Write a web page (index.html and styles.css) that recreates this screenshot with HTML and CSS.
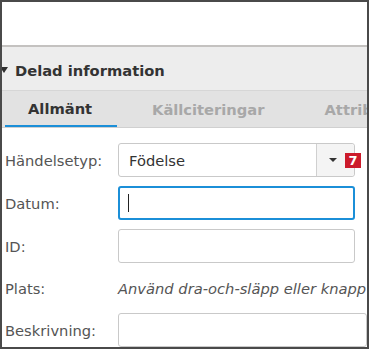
FILE: index.html
```html
<!DOCTYPE html>
<html lang="sv">
  <head>
    <meta charset="UTF-8" />
    <meta name="viewport" content="width=device-width, initial-scale=1.0" />
    <title>Händelse</title>
    <link rel="stylesheet" href="styles.css">
  </head>
  <body>
    <div class="frame">
      <div class="top-space"></div>

      <div class="section-head">
        <span class="caret"></span>
        <span class="section-title">Delad information</span>
      </div>

      <div class="tabs">
        <div class="tab active">Allmänt</div>
        <div class="tab">Källciteringar</div>
        <div class="tab">Attribut</div>
      </div>

      <div class="form">
        <div class="row">
          <label class="label">Händelsetyp:</label>
          <div class="select">
            <span class="select-value">Födelse</span>
            <span class="select-btn"><span class="arrow"></span></span>
            <span class="badge">7</span>
          </div>
        </div>

        <div class="row">
          <label class="label">Datum:</label>
          <div class="input focused"><span class="cursor"></span></div>
        </div>

        <div class="row">
          <label class="label">ID:</label>
          <div class="input"></div>
        </div>

        <div class="row row-text">
          <label class="label">Plats:</label>
          <span class="hint">Använd dra-och-släpp eller knapp</span>
        </div>

        <div class="row">
          <label class="label">Beskrivning:</label>
          <div class="input wide"></div>
        </div>
      </div>
    </div>
  </body>
</html>
```

FILE: styles.css
```css
body {
  margin: 0;
  background: #ffffff;
  font-family: "DejaVu Sans", "Open Sans", sans-serif;
}

.frame {
  width: 365px;
  height: 345px;
  border: 2px solid #4a4a4a;
  overflow: hidden;
  background: #ffffff;
}

.top-space {
  height: 43px;
  background: #ffffff;
  border-bottom: 2px solid #c4c2c0;
}

.section-head {
  height: 43px;
  padding-top: 3px;
  box-sizing: border-box;
  background: #ededed;
  display: flex;
  align-items: center;
  gap: 7px;
}

.caret {
  width: 0;
  height: 0;
  margin-left: -2px;
  border-left: 4px solid transparent;
  border-right: 4px solid transparent;
  border-top: 6px solid #2f2f2f;
}

.section-title {
  font-size: 14.7px;
  font-weight: bold;
  color: #333333;
}

.tabs {
  height: 36px;
  background: #e2e2e2;
  border-top: 1px solid #d6d6d6;
  border-bottom: 1px solid #d0d0d0;
  display: flex;
  white-space: nowrap;
}

.tab {
  flex: none;
  font-size: 14.7px;
  font-weight: bold;
  color: #a8a8a8;
  display: flex;
  align-items: center;
}

.tab.active {
  color: #333333;
  width: 112px;
  padding-left: 23px;
  margin-left: 3px;
  border-bottom: 2px solid #1b8fd8;
  box-sizing: border-box;
}

.tab:nth-child(2) {
  padding-left: 35px;
}

.tab:nth-child(3) {
  padding-left: 60px;
}

.form {
  padding: 15px 0 0 3px;
  display: flex;
  flex-direction: column;
  gap: 9px;
}

.row {
  display: flex;
  align-items: center;
  height: 34px;
  white-space: nowrap;
}

.row-text {
  height: 32px;
}

.label {
  width: 113px;
  flex: none;
  font-size: 14.7px;
  color: #555555;
}

.select {
  position: relative;
  width: 235px;
  height: 32px;
  border: 1px solid #c9c9c9;
  border-radius: 3px;
  display: flex;
}

.select-value {
  flex: 1;
  display: flex;
  align-items: center;
  padding-left: 10px;
  font-size: 14.7px;
  color: #333333;
}

.select-btn {
  width: 37px;
  border-left: 1px solid #d0d0d0;
  background: #f4f4f4;
  border-radius: 0 3px 3px 0;
  display: flex;
  align-items: center;
  justify-content: center;
}

.arrow {
  width: 0;
  height: 0;
  margin-left: -6px;
  border-left: 4px solid transparent;
  border-right: 4px solid transparent;
  border-top: 4px solid #333333;
}

.badge {
  position: absolute;
  left: 226px;
  top: 9px;
  width: 16px;
  height: 15px;
  background: #cc1b2b;
  color: #ffffff;
  font-size: 13px;
  font-weight: bold;
  line-height: 15px;
  text-align: center;
}

.input {
  width: 235px;
  height: 32px;
  border: 1px solid #c9c9c9;
  border-radius: 3px;
  display: flex;
  align-items: center;
}

.input.focused {
  width: 233px;
  height: 30px;
  border: 2px solid #1b8fd8;
}

.cursor {
  width: 1px;
  height: 18px;
  margin-left: 8px;
  background: #222222;
}

.input.wide {
  width: 300px;
}

.hint {
  font-size: 14.7px;
  font-style: italic;
  color: #555555;
}
```
